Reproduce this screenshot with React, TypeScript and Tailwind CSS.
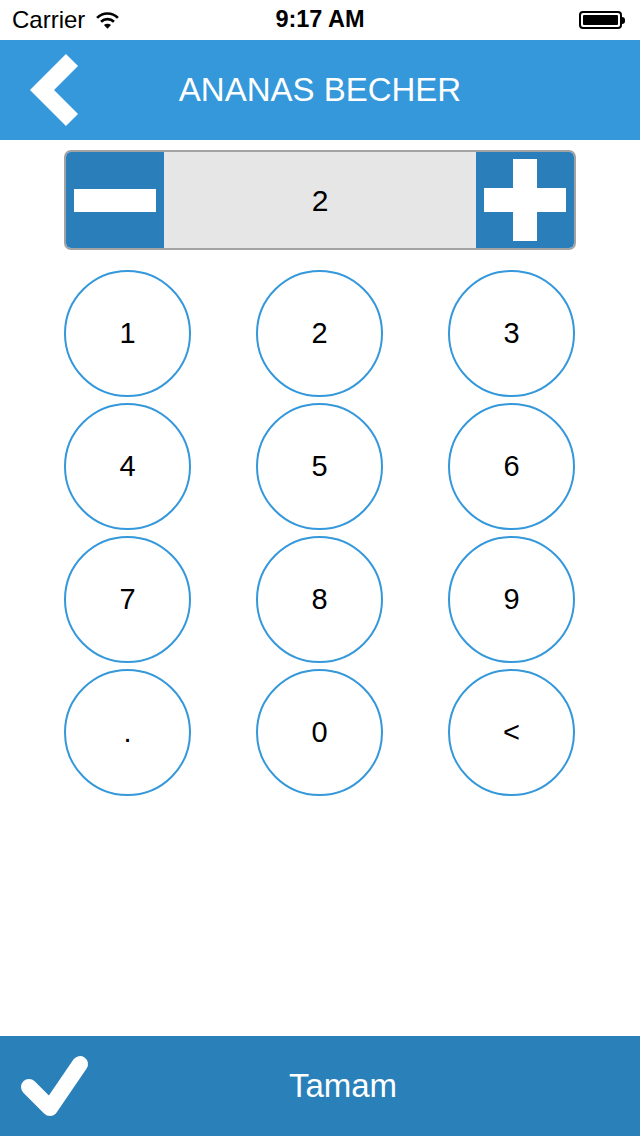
import React, { useState } from "react";

const keys = ["1", "2", "3", "4", "5", "6", "7", "8", "9", ".", "0", "<"];

const StatusBar = () => (
  <div className="h-10 flex items-center justify-between pl-3 pr-3 bg-white text-black relative">
    <div className="flex items-center gap-[10px]">
      <span className="text-[24px]">Carrier</span>
      <svg width="25" height="19" viewBox="0 0 24 18">
        <path d="M2 6.5 A14 14 0 0 1 22 6.5" fill="none" stroke="#000" strokeWidth="2.6" />
        <path d="M5.8 10.2 A9 9 0 0 1 18.2 10.2" fill="none" stroke="#000" strokeWidth="2.6" />
        <path d="M12 17 L8.6 13.4 A5 5 0 0 1 15.4 13.4 Z" fill="#000" />
      </svg>
    </div>
    <span className="absolute left-1/2 -translate-x-1/2 text-[23.5px] font-bold">9:17 AM</span>
    <div className="flex items-center pr-[3px]">
      <div className="w-[43px] h-[18px] border-2 border-black rounded-[4px] p-[2px]">
        <div className="w-full h-full bg-black rounded-[1px]" />
      </div>
      <div className="w-[3px] h-[7px] bg-black rounded-r-sm" />
    </div>
  </div>
);

export default function App() {
  const [value, setValue] = useState("2");

  const press = (k: string) => {
    if (k === "<") setValue(v => v.slice(0, -1));
    else setValue(v => (v === "0" ? k : v + k));
  };

  const step = (d: number) => setValue(v => String(Math.max(0, (parseFloat(v) || 0) + d)));

  return (
    <div className="w-[640px] h-[1136px] flex flex-col bg-white font-['Liberation_Sans',Arial,sans-serif]">
      <StatusBar />

      {/* Nav bar */}
      <div className="h-[100px] bg-[#3598db] flex items-center relative">
        <button className="w-[100px] h-full flex items-center">
          <svg width="100" height="100" viewBox="0 0 100 100">
            <polyline points="72,20 42,50 72,80" fill="none" stroke="#fff" strokeWidth="17" strokeLinejoin="miter" />
          </svg>
        </button>
        <h1 className="absolute left-1/2 -translate-x-1/2 text-white text-[33px]">ANANAS BECHER</h1>
      </div>

      <div className="px-16 pt-[10px]">
        {/* Stepper */}
        <div className="h-[100px] border-2 border-[#a3a3a3] rounded-[7px] overflow-hidden flex">
          <button onClick={() => step(-1)} className="w-[98px] bg-[#2a7fba] flex items-center justify-center">
            <div className="w-[82px] h-[23px] bg-white" />
          </button>
          <div className="flex-1 bg-[#e6e6e6] flex items-center justify-center text-[30px] text-black">{value}</div>
          <button onClick={() => step(1)} className="w-[98px] bg-[#2a7fba] flex items-center justify-center">
            <svg width="82" height="82" viewBox="0 0 82 82">
              <rect x="29" y="0" width="24" height="82" fill="#fff" />
              <rect x="0" y="29" width="82" height="24" fill="#fff" />
            </svg>
          </button>
        </div>

        {/* Keypad */}
        <div className="mt-5 grid grid-cols-[127px_127px_127px] gap-x-[65px] gap-y-[6px]">
          {keys.map(k => (
            <button
              key={k}
              onClick={() => press(k)}
              className="w-[127px] h-[127px] rounded-full border-2 border-[#3598db] flex items-center justify-center text-[29px] text-black bg-white"
            >
              {k}
            </button>
          ))}
        </div>
      </div>

      <div className="flex-1" />

      {/* Bottom bar */}
      <button className="h-[100px] bg-[#2a80b9] flex items-center relative w-full">
        <svg width="100" height="100" viewBox="0 0 100 100" className="absolute left-0 top-0">
          <polyline points="29,51 50,72 80,28" fill="none" stroke="#fff" strokeWidth="16" strokeLinejoin="round" strokeLinecap="round" />
        </svg>
        <span className="absolute left-[343px] -translate-x-1/2 text-white text-[33px]">Tamam</span>
      </button>
    </div>
  );
}
